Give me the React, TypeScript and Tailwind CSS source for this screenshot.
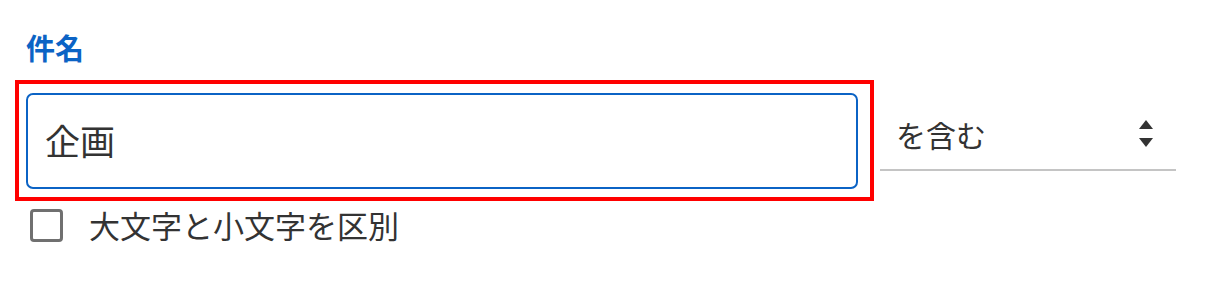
import { useState } from "react";

const font = { fontFamily: '"Noto Sans CJK JP", "Noto Sans", sans-serif' };

function CaretUpDown() {
  return (
    <svg width="14" height="28" viewBox="0 0 14 28" className="text-[#333]">
      <path d="M7 0 L14 9 L0 9 Z" fill="currentColor" />
      <path d="M0 18 L14 18 L7 27 Z" fill="currentColor" />
    </svg>
  );
}

export default function App() {
  const [value, setValue] = useState("企画");
  const [checked, setChecked] = useState(false);

  return (
    <div className="w-[1214px] h-[283px] bg-white pl-[15px] pt-[27px]" style={font}>
      <div className="pl-[11px] text-[29px] font-bold leading-[40px] text-[#0b63c5]">件名</div>

      <div className="mt-[13px] flex items-start">
        <div className="border-4 border-[#ff0000] pl-[7px] pt-[9px] pr-[12px] pb-[8px]">
          <input
            value={value}
            onChange={(e) => setValue(e.target.value)}
            className="block w-[832px] h-[96px] rounded-[7px] border-2 border-[#0b63c5] px-[17px] pb-[4px] text-[35px] text-[#333] outline-none"
            style={font}
          />
        </div>

        <div className="ml-[6px] mt-[25px] w-[296px] h-[66px] border-b-2 border-[#c4c4c4] flex items-center justify-between pl-[16px] pr-[23px] pb-[6px]">
          <span className="text-[30px] text-[#333] leading-none">を含む</span>
          <CaretUpDown />
        </div>
      </div>

      <label className="mt-[4px] ml-[15px] flex items-center gap-[26px] cursor-pointer">
        <span
          onClick={() => setChecked(!checked)}
          className="w-[33px] h-[33px] rounded-[4px] border-[3px] border-[#707070] bg-white"
        />
        <span className="text-[31px] text-[#333] leading-[40px]">大文字と小文字を区別</span>
      </label>
    </div>
  );
}
